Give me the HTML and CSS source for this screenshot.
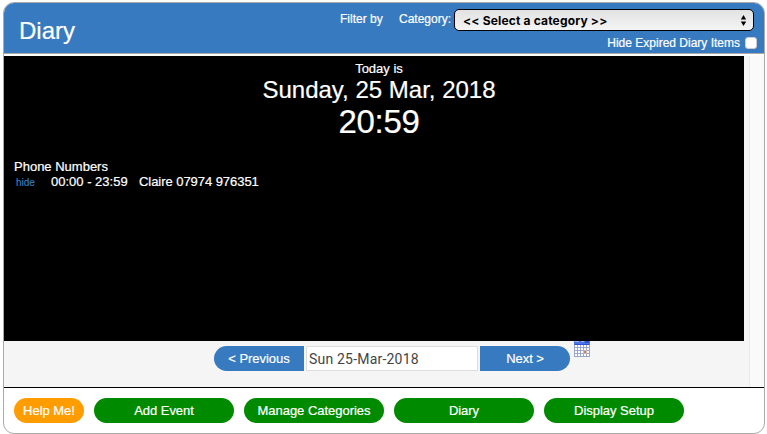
FILE: index.html
```html
<!DOCTYPE html>
<html lang="en">
<head>
<meta charset="utf-8">
<title>Diary</title>
<link rel="stylesheet" href="styles.css">
</head>
<body>
<div class="panel">
  <header class="header">
    <h1 class="title">Diary</h1>
    <div class="filters">
      <div class="filter-row">
        <span class="filter-by">Filter by</span>
        <span class="category">Category:</span>
        <div class="select" role="combobox" aria-expanded="false" tabindex="0">
          <span class="select-text">&lt;&lt; Select a category &gt;&gt;</span>
          <svg class="arrows" width="7" height="11" viewBox="0 0 7 11"><path d="M3.5 0 6.2 4.4H.8zM3.5 11 .8 6.6h5.4z"/></svg>
        </div>
      </div>
      <label class="expired"><span class="expired-text">Hide Expired Diary Items</span><input class="check" type="checkbox"></label>
    </div>
  </header>
  <main class="content">
    <div class="main">
      <section class="board">
        <div class="today">Today is</div>
        <div class="date">Sunday, 25 Mar, 2018</div>
        <div class="time">20:59</div>
        <div class="phones">Phone Numbers</div>
        <div class="entry"><a class="hide">hide</a><span class="hours">00:00 - 23:59</span><span class="person">Claire 07974 976351</span></div>
      </section>
      <nav class="pager">
        <button class="step prev">&lt; Previous</button>
        <div class="day" role="textbox">Sun 25-Mar-2018</div>
        <button class="step next">Next &gt;</button>
        <svg class="calendar" width="16" height="16" viewBox="0 0 16 16" shape-rendering="crispEdges">
          <path fill="#9aa6c8" d="M0 0h16v16H0z"/>
          <path fill="#4f74e4" d="M0 0h16v4H0z"/>
          <path fill="#9db4fa" d="M1 0h4v1H1zM7 0h3v1H7z"/>
          <path fill="#2f52d4" d="M11 0h4v2h-4zM1 3h14v1H1z"/>
          <path fill="#fff" d="M1 4h2v2H1zm3 0h2v2H4zm3 0h2v2H7zm3 0h2v2h-2zm3 0h2v2h-2zM1 7h2v2H1zm3 0h2v2H4zm3 0h2v2H7zm3 0h2v2h-2zm3 0h2v2h-2zM1 10h2v2H1zm3 0h2v2H4zm3 0h2v2H7zm6 0h2v2h-2zM1 13h2v2H1zm3 0h2v2H4zm3 0h2v2H7zm3 0h2v2h-2zm3 0h2v2h-2z"/>
          <path fill="#d8b5a9" d="M9 9h4v4H9z"/><path fill="#b58578" d="M10 10h2v2h-2z"/>
        </svg>
      </nav>
    </div>
    <div class="track"></div>
  </main>
  <footer class="footer">
    <button class="pill help">Help Me!</button>
    <button class="pill">Add Event</button>
    <button class="pill">Manage Categories</button>
    <button class="pill">Diary</button>
    <button class="pill">Display Setup</button>
  </footer>
</div>
</body>
</html>
```
FILE: styles.css
```css
* { box-sizing: border-box; }
html, body { height: 100%; overflow: hidden; }
body { margin: 0; padding: 2px 2px 0 3px; background: #fff; font: 13px/15px "Liberation Sans", Arial, sans-serif; color: #fff; white-space: nowrap; -webkit-text-stroke: .2px currentColor; }
button { border: 0; padding: 0; margin: 0; font: inherit; color: #fff; -webkit-text-stroke: .2px currentColor; }
.panel { height: 432px; border: 1px solid #aaa; border-radius: 11px; overflow: hidden; background: #fff; }
.header { height: 51px; background: #377abf; border-bottom: 1px solid #aaa; display: flex; justify-content: space-between; }
.title { margin: 13px 0 0 15px; font-size: 24px; line-height: 29px; font-weight: normal; }
.filters { padding: 6px 7px 0 0; font-size: 12px; }
.filter-row { display: flex; padding-right: 3px; }
.filter-by { width: 59px; margin-top: 3px; }
.category { width: 55px; margin-top: 3px; }
.select { width: 300px; height: 22px; border: 1px solid #000; border-radius: 5px; background: linear-gradient(#e2e2e2, #f4f4f4); color: #000; display: flex; align-items: center; justify-content: space-between; padding: 0 6px 0 8px; font-family: Inter, sans-serif; font-weight: 700; font-size: 12px; letter-spacing: .17px; -webkit-text-stroke: 0; }
.expired { display: flex; justify-content: flex-end; align-items: center; margin-top: 4px; height: 15px; }
.expired-text { padding-top: 2px; }
.check { appearance: none; width: 12px; height: 12px; margin: 0 0 0 5px; border: 1px solid #ccc; border-radius: 3px; background: #fff; }
.content { height: 331px; margin-top: 2px; display: flex; background: #f5f5f5; }
.main { width: 745px; }
.board { width: 740px; height: 285px; background: #000; padding: 5px 10px 0; }
.today, .date, .time { text-align: center; width: 730px; }
.date { font-size: 24px; line-height: 28px; }
.time { font-size: 33px; line-height: 36px; letter-spacing: -.3px; }
.phones { margin-top: 19px; }
.entry { display: flex; }
.hide { width: 37px; padding: 1px 0 0 2px; font-size: 10px; color: #377abf; }
.hours { width: 88px; }
.person { letter-spacing: -.05px; }
.pager { display: flex; gap: 2px; padding: 0 0 0 210px; }
.step { width: 90px; height: 25px; margin-top: 5px; background: #377abf; letter-spacing: -.05px; }
.prev { border-radius: 13px 0 0 13px; }
.next { border-radius: 0 13px 13px 0; }
.day { width: 172px; height: 25px; margin-top: 5px; border: 1px solid #ddd; background: #fff; color: #444; padding-left: 2px; font: 14px/25px Roboto, sans-serif; letter-spacing: .2px; -webkit-text-stroke: 0; }
.calendar { display: block; margin-left: 2px; }
.track { flex: 1; background: #fafafa; border-left: 1px solid #e8e8e8; }
.footer { height: 46px; border-top: 1px solid #000; display: flex; gap: 10px; padding: 10px 0 0 10px; }
.pill { width: 140px; height: 25px; border-radius: 13px; background: #008a00; letter-spacing: -.03px; }
.help { width: 70px; background: #ff9d00; }
```
